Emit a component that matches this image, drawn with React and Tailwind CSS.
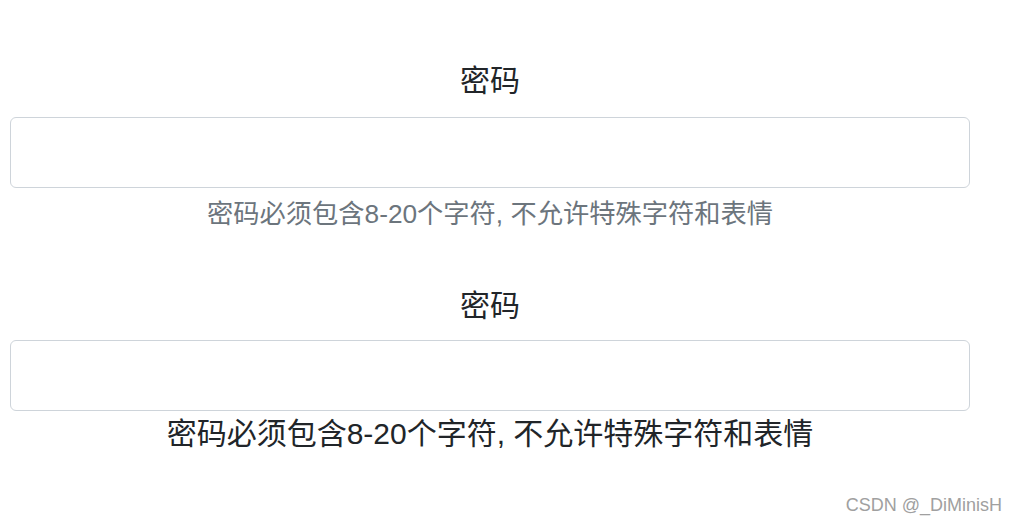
export default function App() {
  const font = { fontFamily: '"Liberation Sans", "Noto Sans CJK SC", sans-serif' };
  return (
    <div className="relative w-[1016px] h-[523px] bg-white overflow-hidden" style={font}>
      <div className="ml-[10px] w-[960px] pt-[58px] text-center">
        <div className="text-[30px] leading-[45px] text-[#212529] mb-[14px]">密码</div>
        <input type="text" className="block w-full h-[71px] border border-[#ced4da] rounded-[6px] bg-white outline-none" />
        <div className="text-[26.25px] leading-[39px] text-[#6c757d] mt-[7px]">密码必须包含8-20个字符, 不允许特殊字符和表情</div>

        <div className="text-[30px] leading-[45px] text-[#212529] mt-[49px] mb-[12px]">密码</div>
        <input type="text" className="block w-full h-[71px] border border-[#ced4da] rounded-[6px] bg-white outline-none" />
        <div className="text-[30px] leading-[45px] text-[#212529]">密码必须包含8-20个字符, 不允许特殊字符和表情</div>
      </div>
      <div className="absolute right-[14px] bottom-[8px] text-[18px] leading-[20px] text-[#a0a0a0]">CSDN @_DiMinisH</div>
    </div>
  );
}
